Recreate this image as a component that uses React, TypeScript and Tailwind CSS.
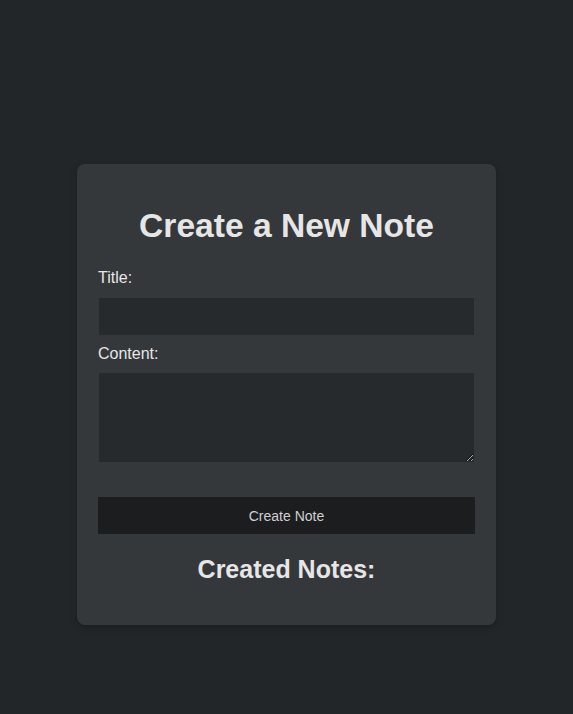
import React, { useState } from "react";

export default function App() {
    const [title, setTitle] = useState("");
    const [content, setContent] = useState("");

    function onSubmit(e: any) {
        e.preventDefault();
    }

    return (
        <div
            className="min-h-screen bg-[#232629] pt-[164px] text-[#e6e6e6]"
            style={{ fontFamily: '"Liberation Sans", Arial, sans-serif' }}
        >
            <div className="mx-auto w-[419px] rounded-lg bg-[#35383b] px-[21px] pt-[20px] pb-[21px] shadow-[0_2px_6px_rgba(0,0,0,0.25)]">
                <h1 className="my-[22.5px] text-center text-[33.6px] leading-[38.6px] font-bold">
                    Create a New Note
                </h1>
                <form onSubmit={onSubmit}>
                    <label className="block pt-px text-base leading-[18.4px]">
                        Title:
                    </label>
                    <input
                        type="text"
                        className="mx-px mt-[11px] block h-[37px] w-[375px] bg-[#262a2c] px-2 text-base text-[#e6e6e6] outline-none"
                        value={title}
                        onChange={(e) => setTitle(e.target.value)}
                    />
                    <label className="mt-[10px] block text-base leading-[18.4px]">
                        Content:
                    </label>
                    <textarea
                        className="mx-px mt-[9.6px] block h-[89px] w-[375px] bg-[#262a2c] px-2 py-1 text-base text-[#e6e6e6] outline-none"
                        value={content}
                        onChange={(e) => setContent(e.target.value)}
                    />
                    <button
                        type="submit"
                        className="mt-[35px] block h-[37px] w-full bg-[#1c1d1f] text-sm text-[#cfcfcf]"
                    >
                        Create Note
                    </button>
                </form>
                <h2 className="my-[20.75px] text-center text-[25px] leading-[28.75px] font-bold">
                    Created Notes:
                </h2>
            </div>
        </div>
    );
}
